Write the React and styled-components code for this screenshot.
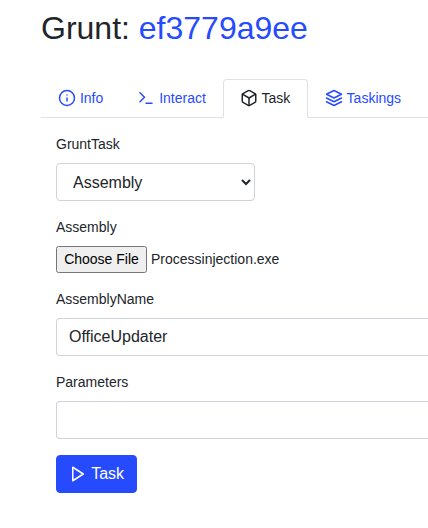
import React from "react";
import styled, { createGlobalStyle } from "styled-components";
import { FiInfo, FiTerminal, FiBox, FiLayers, FiPlay } from "react-icons/fi";

const GlobalStyle = createGlobalStyle`
  *, *::before, *::after { box-sizing: border-box; }
  body {
    margin: 0;
    background: #fff;
    color: #212529;
    font-family: "Liberation Sans", Arial, sans-serif;
    font-size: 14px;
    line-height: 1.5;
  }
`;

const Page = styled.main`
  padding: 9px 0 0 41px;
  overflow: hidden;
`;

const Title = styled.h1`
  margin: 0;
  height: 70px;
  font-size: 32px;
  font-weight: 400;
  line-height: 38.4px;
`;

const TitleLink = styled.a`
  color: #264bff;
  text-decoration: none;
`;

const Tabs = styled.nav`
  display: flex;
  border-bottom: 1px solid #dee2e6;
`;

const Tab = styled.a`
  display: block;
  flex: none;
  height: 39px;
  margin-bottom: -1px;
  padding: 8px ${(p) => (p.$active ? "16.7px" : "16px")} 8px 16px;
  border: 1px solid transparent;
  border-radius: 4px 4px 0 0;
  color: ${(p) => (p.$active ? "#212529" : "#264bff")};
  text-decoration: none;
  white-space: nowrap;
  ${(p) => p.$active && "background: #fff; border-color: #dee2e6 #dee2e6 #fff;"}

  svg {
    width: 18px;
    height: 18px;
    vertical-align: -4px;
  }
`;

const Form = styled.form`
  padding: 16px 0 0 15px;
`;

const Group = styled.div`
  margin-bottom: 16px;
`;

const Label = styled.label`
  display: block;
  margin-bottom: 8px;
  line-height: 21px;
`;

const Input = styled.input`
  display: block;
  width: 100%;
  height: 38px;
  padding: 6px 12px;
  border: 1px solid #ced4da;
  border-radius: 4px;
  background: #fff;
  color: #212529;
  font: 16px/24px "Liberation Sans", Arial, sans-serif;
`;

const TextInput = styled(Input)`
  border-right: 0;
  border-radius: 4px 0 0 4px;
`;

const Select = styled(Input).attrs({ as: "select" })`
  width: 199px;
`;

const FilePicker = styled.div`
  display: flex;
  align-items: center;
  gap: 4px;
  height: 27px;
`;

const FileButton = styled.button`
  width: 91px;
  height: 27px;
  margin: 0;
  padding: 1px 6px;
  white-space: nowrap;
  font: 14px/21px "Liberation Sans", Arial, sans-serif;
`;

const Submit = styled.button`
  width: 81px;
  height: 38px;
  padding: 6px 12px;
  border: 1px solid #264bff;
  border-radius: 4px;
  background: #264bff;
  color: #fff;
  font: 16px/24px "Liberation Sans", Arial, sans-serif;
  white-space: nowrap;

  svg {
    width: 18px;
    height: 18px;
    vertical-align: -4px;
  }
`;

const tabs = [
  { name: "Info", Icon: FiInfo },
  { name: "Interact", Icon: FiTerminal },
  { name: "Task", Icon: FiBox, active: true },
  { name: "Taskings", Icon: FiLayers },
];

export default function App() {
  return (
    <Page>
      <GlobalStyle />
      <Title>
        Grunt: <TitleLink href="#">ef3779a9ee</TitleLink>
      </Title>
      <Tabs>
        {tabs.map(({ name, Icon, active }) => (
          <Tab key={name} href="#" $active={active}>
            <Icon /> {name}
          </Tab>
        ))}
      </Tabs>
      <Form>
        <Group>
          <Label htmlFor="task">GruntTask</Label>
          <Select id="task" defaultValue="Assembly">
            <option>Assembly</option>
          </Select>
        </Group>
        <Group>
          <Label>Assembly</Label>
          <FilePicker>
            <FileButton type="button">Choose File</FileButton>
            <span>Processinjection.exe</span>
          </FilePicker>
        </Group>
        <Group>
          <Label htmlFor="name">AssemblyName</Label>
          <TextInput id="name" defaultValue="OfficeUpdater" />
        </Group>
        <Group>
          <Label htmlFor="params">Parameters</Label>
          <TextInput id="params" />
        </Group>
        <Submit type="button">
          <FiPlay /> Task
        </Submit>
      </Form>
    </Page>
  );
}
